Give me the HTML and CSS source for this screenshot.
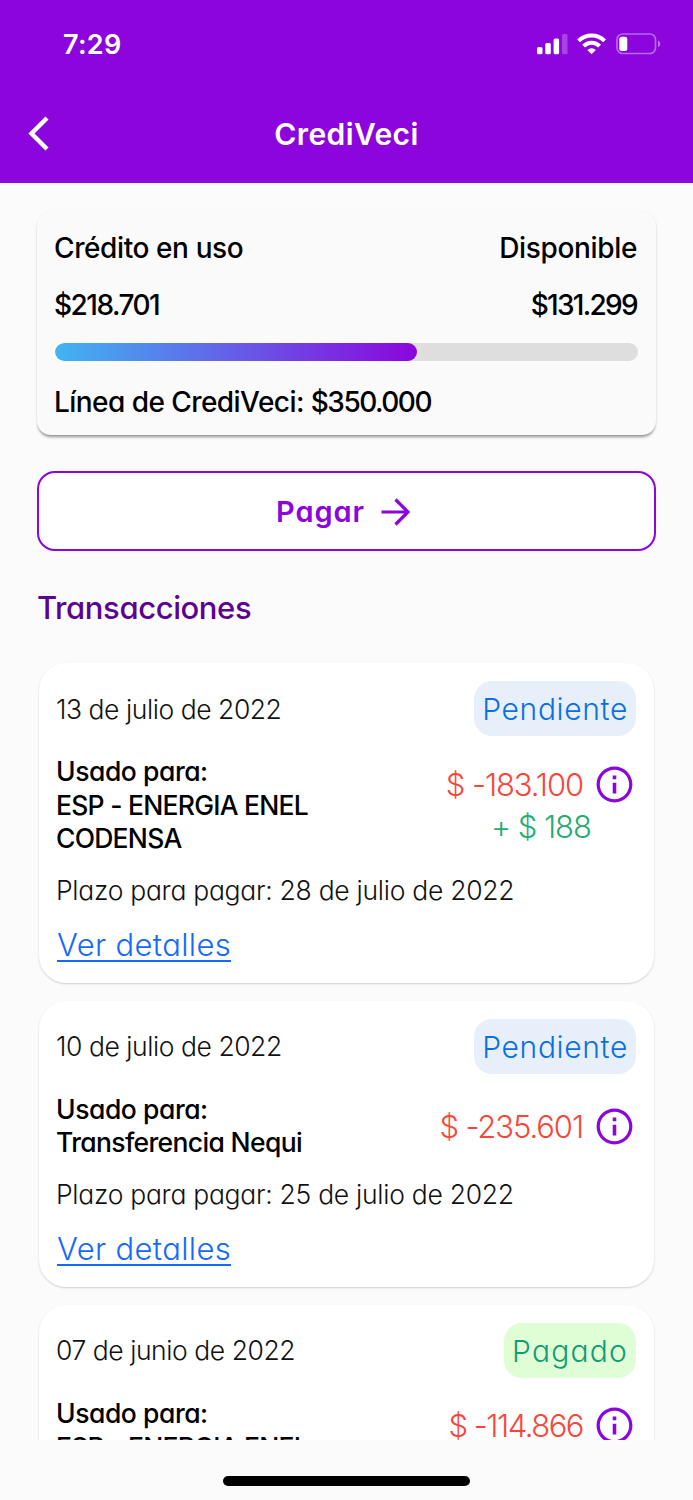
FILE: index.html
```
<!DOCTYPE html>
<html lang="es">
<head>
<meta charset="utf-8">
<title>CrediVeci</title>
<link rel="stylesheet" href="styles.css">
</head>
<body>
<svg class="defs" aria-hidden="true">
  <symbol id="info" viewBox="0 0 24 24"><path d="M11 7h2v2h-2zm0 4h2v6h-2zm1-9C6.480 2 2 6.480 2 12s4.480 10 10 10 10-4.480 10-10S17.520 2 12 2zm0 18.200c-4.520 0-8.200-3.680-8.200-8.200S7.480 3.800 12 3.800s8.200 3.680 8.200 8.200-3.680 8.200-8.200 8.200z"/></symbol>
</svg>
<div class="screen">
  <header class="header">
    <div class="status">
      <span class="clock">7:29</span>
      <svg class="status-icons" viewBox="0 0 126 24" aria-hidden="true">
        <g fill="#fff">
          <rect x="1" y="14" width="5.500" height="7.200" rx="1.500"/>
          <rect x="9.300" y="10" width="5.500" height="11.200" rx="1.500"/>
          <rect x="17.600" y="5.500" width="5.500" height="15.700" rx="1.500"/>
          <rect x="26" y="1" width="5.500" height="20.200" rx="1.500" opacity=".25"/>
          <path d="M55.600 21.200l4.200-4.200a6 6 0 0 0-8.400 0z"/>
        </g>
        <g fill="none" stroke="#fff" stroke-width="4">
          <path d="M42.600 7.900a18.500 18.500 0 0 1 26 0"/>
          <path d="M47.600 13.200a11.200 11.200 0 0 1 16 0"/>
        </g>
        <rect x="81" y="1" width="38.500" height="19.500" rx="5.500" fill="none" stroke="#fff" stroke-opacity=".4" stroke-width="1.700"/>
        <rect x="83.300" y="3.800" width="8" height="14.200" rx="2.500" fill="#fff"/>
        <path d="M122 7.500c3 1.300 3 5.300 0 6.600z" fill="#fff" opacity=".45"/>
      </svg>
    </div>
    <div class="nav">
      <svg class="back" viewBox="0 0 24 38" aria-hidden="true"><path d="M20 3L4.500 18.500l15.500 15.500" fill="none" stroke="#fff" stroke-width="4.400"/></svg>
      <h1 class="title">CrediVeci</h1>
    </div>
  </header>

  <main class="content">
    <section class="credit">
      <div class="row"><span>Crédito en uso</span><span class="available">Disponible</span></div>
      <div class="row"><span class="num">$218.701</span><span class="num num-right">$131.299</span></div>
      <div class="track"><div class="fill" style="width:62.100%"></div></div>
      <div class="row line"><span>Línea de CrediVeci: <span class="num">$350.000</span></span></div>
    </section>

    <button class="pay"><span>Pagar</span>
      <svg class="arrow" viewBox="0 0 30 28" aria-hidden="true"><path d="M.5 14H26M14.500 1.500L27 14 14.500 26.500" fill="none" stroke="currentColor" stroke-width="3.200"/></svg>
    </button>

    <h2 class="heading">Transacciones</h2>

    <div class="list">
      <article class="card">
        <div class="top"><span class="date">13 de julio de 2022</span><span class="badge">Pendiente</span></div>
        <div class="body">
          <p class="used"><span class="label">Usado para:</span><br><span class="caps">ESP - ENERGIA ENEL<br>CODENSA</span></p>
          <div class="amounts">
            <div class="amount"><span class="debit">$ -183.100</span><svg class="info"><use href="#info"/></svg></div>
            <div class="fee">+ $ 188</div>
          </div>
        </div>
        <p class="due">Plazo para pagar: 28 de julio de 2022</p>
        <a class="details">Ver detalles</a>
      </article>

      <article class="card">
        <div class="top"><span class="date">10 de julio de 2022</span><span class="badge">Pendiente</span></div>
        <div class="body">
          <p class="used"><span class="label">Usado para:</span><br>Transferencia Nequi</p>
          <div class="amounts">
            <div class="amount"><span class="debit">$ -235.601</span><svg class="info"><use href="#info"/></svg></div>
          </div>
        </div>
        <p class="due">Plazo para pagar: 25 de julio de 2022</p>
        <a class="details">Ver detalles</a>
      </article>

      <article class="card">
        <div class="top"><span class="date">07 de junio de 2022</span><span class="badge badge-paid">Pagado</span></div>
        <div class="body body-clipped">
          <p class="used"><span class="label">Usado para:</span><br><span class="caps">ESP - ENERGIA ENEL</span></p>
          <div class="amounts">
            <div class="amount"><span class="debit">$ -114.866</span><svg class="info"><use href="#info"/></svg></div>
          </div>
        </div>
      </article>
    </div>
  </main>

  <footer class="home"><div class="home-bar"></div></footer>
</div>
</body>
</html>
```
FILE: styles.css
```
* { box-sizing: border-box; }
body {
  margin: 0;
  background: #fbfbfb;
  color: #000;
  font-family: Inter, "Noto Sans", sans-serif;
  font-feature-settings: "cv11";
}
p, h1, h2 { margin: 0; }
.defs { display: none; }
.screen { display: flex; flex-direction: column; height: 1500px; overflow: hidden; }

.header { flex: none; height: 183px; background: #8b05dc; color: #fff; }
.status { display: flex; justify-content: space-between; align-items: center; height: 89px; padding: 0 31px 0 63px; }
.clock { font-size: 27px; font-weight: 600; letter-spacing: .3px; }
.status-icons { width: 126px; height: 24px; }
.nav { display: grid; grid-template-columns: 24px 1fr 24px; align-items: center; height: 90px; padding: 0 27px; }
.back { width: 24px; height: 38px; }
.title { font-size: 30px; font-weight: 600; letter-spacing: .4px; text-align: center; }

.content { flex: 1; min-height: 0; overflow: hidden; padding: 28px 37px 0; }
.credit {
  height: 224px;
  padding: 16px 19px 0 17px;
  border-radius: 14px;
  background: #fafafa;
  box-shadow: 0 3px 3px -1px rgba(0, 0, 0, .42), 0 0 1px rgba(0, 0, 0, .08);
  font-size: 28px;
  font-weight: 450;
  line-height: 42px;
  letter-spacing: -.4px;
}
.row { display: flex; justify-content: space-between; height: 42px; margin-bottom: 15px; }
.available { letter-spacing: -.35px; }
.num { letter-spacing: -1.5px; }
.num-right { letter-spacing: -1.700px; }
.track { height: 18px; margin: 17px -1px 0 1px; border-radius: 9px; background: #dedede; overflow: hidden; }
.fill { height: 100%; border-radius: 9px; background: linear-gradient(90deg, #40b5f2, #8b05dc); }
.line { margin: 20px 0 0; letter-spacing: -.55px; }

.pay {
  display: flex;
  justify-content: center;
  align-items: center;
  gap: 16px;
  width: 100%;
  height: 80px;
  margin-top: 36px;
  padding: 2px 6px 0 0;
  border: 2px solid #8b05dc;
  border-radius: 18px;
  background: #fff;
  color: #8b05dc;
  font: 600 29px/40px Inter, sans-serif;
  font-feature-settings: "cv11";
  letter-spacing: .9px;
}
.arrow { width: 30px; height: 28px; margin-top: -1px; }
.heading { height: 48px; margin-top: 33px; color: #5b0390; font-size: 31px; font-weight: 450; line-height: 48px; letter-spacing: -.4px; }

.list { display: grid; gap: 18px; margin-top: 31px; padding: 0 2px; }
.card {
  padding: 18px 18px 21px;
  border-radius: 27px;
  background: #fff;
  box-shadow: 0 1px 2px rgba(0, 0, 0, .18);
}
.top { display: flex; justify-content: space-between; align-items: center; height: 55px; }
.date, .due { margin-left: -1px; color: #111; font-size: 26.5px; font-weight: 300; }
.date { letter-spacing: -.45px; }
.badge {
  height: 55px;
  padding: 0 8px;
  border-radius: 18px;
  background: #e7effb;
  color: #0b6fe4;
  font-size: 30px;
  font-weight: 300;
  line-height: 56px;
  letter-spacing: .65px;
}
.badge-paid { background: #dffed5; color: #0f9d73; letter-spacing: 1.2px; }
.body { display: flex; justify-content: space-between; align-items: center; margin-top: 19px; }
.body-clipped { align-items: flex-start; }
.body-clipped .amounts { margin-top: 8px; letter-spacing: -1.5px; }
.used { margin-left: -1px; font-size: 26.5px; font-weight: 500; line-height: 33.600px; letter-spacing: -.65px; }
.label { letter-spacing: -.45px; }
.caps { letter-spacing: -.75px; }
.amounts { font-size: 31px; font-weight: 300; line-height: 43px; letter-spacing: -1.1px; text-align: center; }
.amount { display: flex; align-items: center; gap: 10px; height: 42px; color: #f8473a; }
.info { width: 43px; height: 43px; fill: #8b05dc; }
.fee { height: 42px; color: #24ac72; }
.due { margin-top: 18px; line-height: 33px; letter-spacing: -.28px; }
.details {
  display: block;
  width: fit-content;
  margin-top: 22px;
  border-bottom: 2px solid #1668f8;
  color: #1668f8;
  font-size: 31px;
  font-weight: 300;
  line-height: 31px;
  letter-spacing: .35px;
}
.home { flex: none; display: flex; justify-content: center; height: 60px; padding-top: 36px; }
.home-bar { width: 247px; height: 10px; border-radius: 5px; background: #000; }
```
